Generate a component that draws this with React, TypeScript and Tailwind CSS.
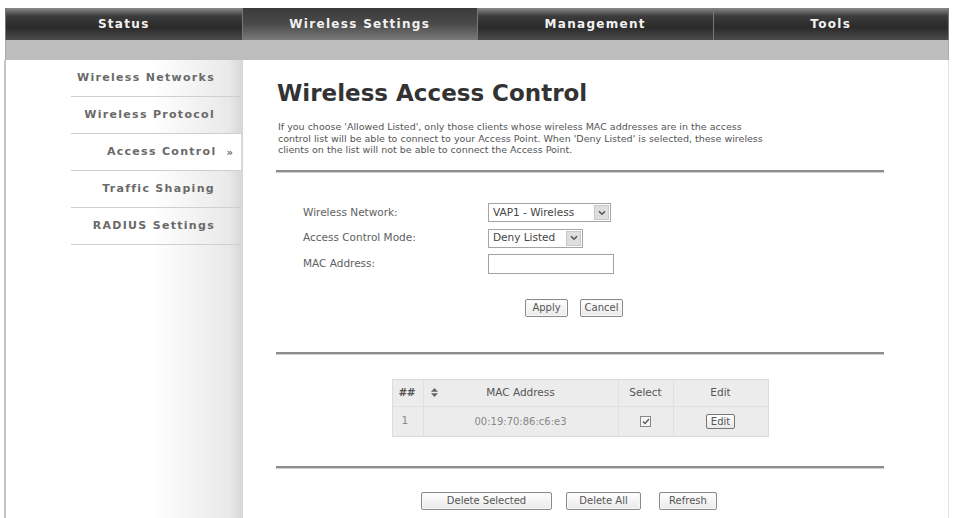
import React from "react";

const tabs = ["Status", "Wireless Settings", "Management", "Tools"];
const side = ["Wireless Networks", "Wireless Protocol", "Access Control", "Traffic Shaping", "RADIUS Settings"];

function Btn({ children, w }: { children: React.ReactNode; w: string }) {
  return (
    <div
      className={`${w} h-[18px] flex items-center justify-center border border-[#8a8a8a] rounded-[2px] bg-[linear-gradient(to_bottom,#ffffff,#e9e9e9)] text-[10px] text-[#555] leading-none shadow-[inset_0_0_0_1px_#f8f8f8]`}
    >
      {children}
    </div>
  );
}

function Chevron() {
  return (
    <svg width="8" height="6" viewBox="0 0 8 6">
      <path d="M1 1.2 L4 4.2 L7 1.2" stroke="#555" strokeWidth="1.6" fill="none" />
    </svg>
  );
}

function Select({ text, w }: { text: string; w: string }) {
  return (
    <div className={`${w} h-[19px] flex items-stretch border border-[#a5a5a5] bg-white`}>
      <div className="flex-1 flex items-center pl-[4px] text-[10.5px] text-[#444] whitespace-nowrap overflow-hidden">{text}</div>
      <div className="w-[15px] m-[1px] bg-[#dedede] border border-[#c8c8c8] flex items-center justify-center">
        <Chevron />
      </div>
    </div>
  );
}

export default function App() {
  return (
    <div className="w-[954px] h-[518px] bg-white overflow-hidden font-['DejaVu_Sans',sans-serif]">
      <div className="pt-[8px] px-[5px]">
        <div className="grid grid-cols-4 h-[32px] bg-[linear-gradient(to_bottom,#8a8a8a,#3c3c3c_25%,#2a2a2a_60%,#4a4a4a)] border-x border-[#777]">
          {tabs.map((t, i) => (
            <div
              key={t}
              className={`flex items-center justify-center text-[#f2f2f2] font-bold text-[12px] tracking-[1.3px] ${
                i > 0 ? "border-l border-[#777]" : ""
              } ${i === 1 ? "bg-[linear-gradient(to_bottom,#3a3a3a,#4a4a4a_50%,#7a7a7a)]" : ""}`}
            >
              {t}
            </div>
          ))}
        </div>
        <div className="h-[20px] bg-[#bdbdbd] border-x border-[#aaa]" />
      </div>
      <div className="flex h-[458px] ml-[4px] mr-[5px] border-l-2 border-[#c4c4c4] border-r border-r-[#e2e2e2]">
        <div className="w-[237px] h-full bg-[linear-gradient(to_right,#ffffff,#ffffff_62%,#e9e9e9_94%,#d6d6d6)] flex flex-col">
          {side.map((s, i) => (
            <div
              key={s}
              className={`h-[37px] flex items-center justify-end border-b border-[#cfcfcf] ml-[65px] mr-[2px] ${
                i === 2 ? "bg-white pr-[9px] -mr-[1px]" : "pr-[26px]"
              } text-[11px] font-bold tracking-[1.3px] text-[#6a6a6a]`}
            >
              <span>{s}</span>
              {i === 2 && <span className="ml-[10px] text-[10px] tracking-[-1px]">»</span>}
            </div>
          ))}
        </div>
        <div className="flex-1 pl-[33px] pr-[64px] pt-[20px] flex flex-col">
          <div className="text-[23px] leading-[26px] font-bold text-[#333] pl-[1px]">Wireless Access Control</div>
          <div className="mt-[15px] pl-[2px] text-[9.5px] leading-[11.5px] text-[#555] whitespace-nowrap">
            <div>If you choose 'Allowed Listed', only those clients whose wireless MAC addresses are in the access</div>
            <div>control list will be able to connect to your Access Point. When 'Deny Listed' is selected, these wireless</div>
            <div>clients on the list will not be able to connect the Access Point.</div>
          </div>
          <div className="mt-[14px] h-[2px] bg-[#8c8c8c] shadow-[0_1px_0_#d0d0d0]" />

          <div className="mt-[31px] pl-[27px] flex flex-col gap-[6px] text-[10.5px] text-[#606060]">
            <div className="flex items-center h-[20px]">
              <div className="w-[185px]">Wireless Network:</div>
              <Select text="VAP1 - Wireless" w="w-[123px]" />
            </div>
            <div className="flex items-center h-[19px]">
              <div className="w-[185px]">Access Control Mode:</div>
              <Select text="Deny Listed" w="w-[95px]" />
            </div>
            <div className="flex items-center h-[21px]">
              <div className="w-[185px]">MAC Address:</div>
              <div className="w-[126px] h-[20px] border border-[#a0a0a0] bg-white" />
            </div>
          </div>
          <div className="mt-[24px] flex justify-center gap-[12px] pr-[12px]">
            <Btn w="w-[43px]">Apply</Btn>
            <Btn w="w-[43px]">Cancel</Btn>
          </div>
          <div className="mt-[35px] h-[2px] bg-[#8c8c8c] shadow-[0_1px_0_#d0d0d0]" />

          <div className="mt-[25px] flex justify-center">
            <div className="grid grid-cols-[31px_194px_56px_94px] border border-[#dcdcdc] bg-[#ececec] text-[10.5px] text-[#555]">
              <div className="h-[27px] flex items-center pl-[6px] font-bold tracking-[-0.5px] border-r border-b border-[#e0e0e0]">##</div>
              <div className="h-[27px] flex items-center pl-[7px] border-b border-[#e0e0e0]">
                <svg width="7" height="9" viewBox="0 0 7 9">
                  <path d="M3.5 0 L7 3.8 L0 3.8 Z M0 5.2 L7 5.2 L3.5 9 Z" fill="#666" />
                </svg>
                <span className="flex-1 text-center pr-[14px]">MAC Address</span>
              </div>
              <div className="h-[27px] flex items-center justify-center border-x border-b border-[#e0e0e0]">Select</div>
              <div className="h-[27px] flex items-center justify-center border-b border-[#e0e0e0]">Edit</div>

              <div className="h-[29px] flex items-center pl-[9px] text-[#888] border-r border-[#dedede]">1</div>
              <div className="h-[29px] flex items-center justify-center text-[#888] text-[10px]">00:19:70:86:c6:e3</div>
              <div className="h-[29px] flex items-center justify-center border-x border-[#e0e0e0]">
                <div className="w-[11px] h-[11px] border border-[#888] bg-[#f6f6f6] flex items-center justify-center">
                  <svg width="8" height="7" viewBox="0 0 8 7">
                    <path d="M1 3.5 L3 5.5 L7 1" stroke="#555" strokeWidth="1.3" fill="none" />
                  </svg>
                </div>
              </div>
              <div className="h-[29px] flex items-center justify-center">
                <div className="w-[29px] h-[15px] flex items-center justify-center border border-[#777] rounded-[2px] bg-[linear-gradient(to_bottom,#ffffff,#e9e9e9)] text-[10px] text-[#555]">
                  Edit
                </div>
              </div>
            </div>
          </div>
          <div className="mt-[29px] h-[2px] bg-[#8c8c8c] shadow-[0_1px_0_#d0d0d0]" />

          <div className="mt-[24px] flex justify-center pr-[22px]">
            <Btn w="w-[131px]">Delete Selected</Btn>
            <div className="w-[14px]" />
            <Btn w="w-[75px]">Delete All</Btn>
            <div className="w-[18px]" />
            <Btn w="w-[58px]">Refresh</Btn>
          </div>
        </div>
      </div>
    </div>
  );
}
